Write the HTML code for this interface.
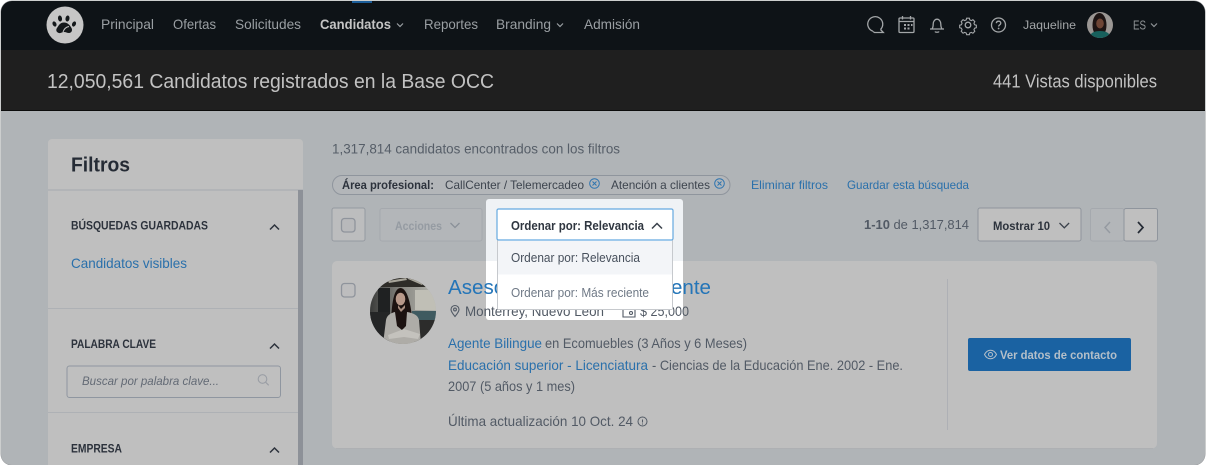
<!DOCTYPE html>
<html lang="es"><head><meta charset="utf-8"><title>Candidatos</title>
<style>
html,body{margin:0;padding:0;background:#fff;width:1206px;height:465px;overflow:hidden}
svg{display:block}
text{font-family:"Liberation Sans",sans-serif}
.b{font-weight:700}
.nav{font-size:14px;fill:#9a9fa3}
.sec{font-size:12px;font-weight:700;fill:#2c323c}
.blue{fill:#2a70ab}
.g{fill:#525a65}
</style></head><body>
<svg width="1206" height="465" viewBox="0 0 1206 465" xmlns="http://www.w3.org/2000/svg">
<defs>
<clipPath id="page"><rect x="1" y="1" width="1204" height="464" rx="11"/></clipPath>
<clipPath id="av"><circle cx="403" cy="311" r="33"/></clipPath>
<clipPath id="av2"><circle cx="1100" cy="25" r="13"/></clipPath>
<linearGradient id="ph" x1="0" x2="1" y1="0" y2="0"><stop offset="0" stop-color="#3a3b3a"/><stop offset=".5" stop-color="#8b8a84"/><stop offset="1" stop-color="#b3b4ae"/></linearGradient>
</defs>
<rect width="1206" height="465" fill="#fff"/>
<rect x="0.5" y="0.5" width="1205" height="465" rx="11.5" fill="#9a9c9e"/>
<g clip-path="url(#page)">
<rect width="1206" height="465" fill="#b0b4b7"/>
<rect y="0" width="1206" height="50" fill="#0e1317"/>
<rect y="50" width="1206" height="61" fill="#1f1f1f"/>
<rect y="110" width="1206" height="1" fill="#0c0c0c"/>
<rect x="352" y="0" width="20" height="3" fill="#1c5e9a"/>

<!-- logo -->
<circle cx="65" cy="25" r="18.500" fill="#c6c6c6"/>
<path d="M59 33c-2.500-.5-3.500-3-2-5 1.500-2.200 3-5.500 7-5.500 4 0 6 3 7.500 5.500 1.300 2.200 0 5-2.500 5-2 0-3-1-5-1s-3 1.500-5 1z" fill="#14181b"/>
<ellipse cx="54.500" cy="24" rx="1.900" ry="2.700" fill="#14181b" transform="rotate(-25 54.500 24)"/>
<ellipse cx="60" cy="18.500" rx="2" ry="3" fill="#14181b" transform="rotate(-10 60 18.500)"/>
<ellipse cx="67.500" cy="18.500" rx="2" ry="3" fill="#14181b" transform="rotate(10 67.500 18.500)"/>
<ellipse cx="74" cy="24" rx="1.900" ry="2.700" fill="#14181b" transform="rotate(25 74 24)"/>
<path d="M63 32c1-3 3-5 6-5.500" stroke="#c6c6c6" stroke-width="1" fill="none"/>

<!-- nav -->
<text class="nav" x="101" y="29" textLength="53" lengthAdjust="spacingAndGlyphs">Principal</text>
<text class="nav" x="173" y="29" textLength="43" lengthAdjust="spacingAndGlyphs">Ofertas</text>
<text class="nav" x="235" y="29" textLength="66" lengthAdjust="spacingAndGlyphs">Solicitudes</text>
<text class="nav b" x="320" y="29" textLength="71" lengthAdjust="spacingAndGlyphs" style="fill:#c4c4c4">Candidatos</text>
<path d="M397 23.500l3 3 3-3" stroke="#9a9fa3" stroke-width="1.200" fill="none"/>
<text class="nav" x="424" y="29" textLength="54" lengthAdjust="spacingAndGlyphs">Reportes</text>
<text class="nav" x="496" y="29" textLength="55" lengthAdjust="spacingAndGlyphs">Branding</text>
<path d="M557 23.500l3 3 3-3" stroke="#9a9fa3" stroke-width="1.200" fill="none"/>
<text class="nav" x="584" y="29" textLength="56" lengthAdjust="spacingAndGlyphs">Admisión</text>

<!-- nav icons -->
<g fill="none" stroke="#a3a6a8" stroke-width="1.300">
<path d="M880.500 29.500a7.500 7.500 0 1 0-7.500 1.800"/><path d="M873 31.500l1.500 1h8.800l-2.800-3"/>
<rect x="899" y="18" width="15" height="14.500" rx="1"/><path d="M902.500 16v3.500M910.500 16v3.500M899 21.500h15"/>
<path d="M930 29h14M932 29c1-1.500 1.200-2.500 1.200-5 0-2.500 1.700-4.800 3.800-4.800s3.800 2.300 3.800 4.800c0 2.500.2 3.500 1.200 5M935 31.500c.5 1 3.500 1 4 0"/>
<circle cx="968" cy="25" r="2.800"/><path d="M966.400 17.500h3.200l.5 2 1.800.8 1.900-1 2.200 2.200-1 1.900.8 1.800 2 .5v3l-2 .6-.8 1.700 1 1.900-2.200 2.300-1.900-1-1.800.7-.5 2h-3.200l-.5-2-1.800-.7-1.900 1-2.200-2.300 1-1.900-.8-1.700-2-.6v-3l2-.5.8-1.800-1-1.900 2.200-2.200 1.900 1 1.800-.8z" transform="translate(968 25) scale(.85) translate(-968 -25.500)"/>
<circle cx="998.500" cy="25" r="7"/><path d="M996.300 23.200c.2-1.300 1.100-2 2.300-2 1.300 0 2.200.8 2.200 1.900 0 1.700-2.200 1.800-2.200 3.400"/>
</g>
<rect x="904" y="24" width="2" height="2" fill="#a3a6a8"/><rect x="907.500" y="24" width="2" height="2" fill="#a3a6a8"/><rect x="904" y="27.500" width="2" height="2" fill="#a3a6a8"/><rect x="907.500" y="27.500" width="2" height="2" fill="#a3a6a8"/><rect x="911" y="24" width="1.500" height="2" fill="#a3a6a8"/>
<circle cx="998.600" cy="28.500" r=".9" fill="#a3a6a8"/>
<text x="1023" y="29" font-size="12" fill="#a3a6a8" textLength="53" lengthAdjust="spacingAndGlyphs">Jaqueline</text>
<g clip-path="url(#av2)">
<rect x="1087" y="12" width="26" height="26" fill="#9b9794"/>
<ellipse cx="1099.500" cy="25" rx="7" ry="12" fill="#1d1413"/>
<ellipse cx="1100" cy="23.500" rx="3.800" ry="5" fill="#6e4535"/>
<path d="M1089 38c1-5 5-7 11-7s10 2 11 7z" fill="#17605c"/>
</g>
<text x="1133" y="29.500" font-size="13" fill="#8f9396" textLength="13" lengthAdjust="spacingAndGlyphs">ES</text>
<path d="M1151 23.500l3 3 3-3" stroke="#8f9396" stroke-width="1.200" fill="none"/>

<!-- header -->
<text x="47" y="88" font-size="20" fill="#c2c2c2" textLength="447" lengthAdjust="spacingAndGlyphs">12,050,561 Candidatos registrados en la Base OCC</text>
<text x="993" y="87.500" font-size="18" fill="#c2c2c2" textLength="164" lengthAdjust="spacingAndGlyphs">441 Vistas disponibles</text>

<!-- sidebar -->
<path d="M48 465V143a4 4 0 0 1 4-4h247a4 4 0 0 1 4 4v322z" fill="#bfbfbf"/>
<rect x="48" y="189" width="255" height="2" fill="#b2b4b7"/>
<rect x="298" y="190" width="5" height="275" fill="#8d9198"/>
<text x="71" y="171.500" font-size="20" font-weight="700" fill="#252b35" textLength="59" lengthAdjust="spacingAndGlyphs">Filtros</text>
<text class="sec" x="71" y="229.500" textLength="137" lengthAdjust="spacingAndGlyphs">BÚSQUEDAS GUARDADAS</text>
<path d="M270 229.500l4.500-4.500 4.500 4.500" stroke="#2c323c" stroke-width="1.500" fill="none"/>
<text class="blue" x="71" y="268" font-size="14" textLength="116" lengthAdjust="spacingAndGlyphs">Candidatos visibles</text>
<rect x="48" y="308" width="250" height="1" fill="#aeb1b5"/>
<text class="sec" x="71" y="348" textLength="85" lengthAdjust="spacingAndGlyphs">PALABRA CLAVE</text>
<path d="M270 348.500l4.500-4.500 4.500 4.500" stroke="#2c323c" stroke-width="1.500" fill="none"/>
<rect x="67" y="366" width="213.500" height="31.500" rx="2.500" fill="#bfbfbf" stroke="#8f96a0" stroke-width="1"/>
<text x="82" y="385" font-size="12" font-style="italic" fill="#636a75" textLength="137" lengthAdjust="spacingAndGlyphs">Buscar por palabra clave...</text>
<circle cx="262.500" cy="379" r="4.300" fill="none" stroke="#9a9ea5" stroke-width="1.100"/><path d="M265.700 382.300l3 3" stroke="#9a9ea5" stroke-width="1.100"/>
<rect x="48" y="412" width="250" height="1" fill="#aeb1b5"/>
<text class="sec" x="71" y="452.500" textLength="51" lengthAdjust="spacingAndGlyphs">EMPRESA</text>
<path d="M270 452.500l4.500-4.500 4.500 4.500" stroke="#2c323c" stroke-width="1.500" fill="none"/>

<!-- results header -->
<text x="332" y="153.500" font-size="14" fill="#565e68" textLength="288" lengthAdjust="spacingAndGlyphs">1,317,814 candidatos encontrados con los filtros</text>
<rect x="332.500" y="175.500" width="397.500" height="19" rx="9.500" fill="#b3b6b9" stroke="#8f959d"/>
<text x="342" y="189" font-size="12" font-weight="700" fill="#2c323c" textLength="92" lengthAdjust="spacingAndGlyphs">Área profesional:</text>
<text x="445" y="189" font-size="12" fill="#3d444e" textLength="139" lengthAdjust="spacingAndGlyphs">CallCenter / Telemercadeo</text>
<g fill="none" stroke="#2f75b0" stroke-width="1">
<circle cx="594.500" cy="183.500" r="4.800"/><path d="M592.500 181.500l4 4m0-4l-4 4"/>
<circle cx="719.500" cy="183.500" r="4.800"/><path d="M717.500 181.500l4 4m0-4l-4 4"/>
</g>
<text x="611" y="189" font-size="12" fill="#3d444e" textLength="99" lengthAdjust="spacingAndGlyphs">Atención a clientes</text>
<text class="blue" x="751" y="189" font-size="12" textLength="77" lengthAdjust="spacingAndGlyphs">Eliminar filtros</text>
<text class="blue" x="847" y="189" font-size="12" textLength="122" lengthAdjust="spacingAndGlyphs">Guardar esta búsqueda</text>

<rect x="332" y="208" width="33" height="33" rx="2" fill="#bcbdbe" stroke="#959aa1"/>
<rect x="341.500" y="218.500" width="13.500" height="13.500" rx="3" fill="#b8b9bb" stroke="#8f949c" stroke-width="1.300"/>
<rect x="380" y="208.500" width="102" height="32.500" rx="2" fill="#b3b6b9" stroke="#a5a9ae"/>
<text x="395" y="230" font-size="12" font-weight="700" fill="#959ba2" textLength="47" lengthAdjust="spacingAndGlyphs">Acciones</text>
<path d="M450.500 223l4.500 4.500 4.500-4.500" stroke="#8a9098" stroke-width="1.300" fill="none"/>

<text x="864" y="229" font-size="13" fill="#525a65" textLength="105" lengthAdjust="spacingAndGlyphs"><tspan font-weight="700">1-10</tspan> de 1,317,814</text>
<rect x="978" y="208" width="103" height="33" rx="2" fill="#bfbfbf" stroke="#8f959d"/>
<text x="993" y="230" font-size="12" font-weight="700" fill="#2c323c" textLength="57" lengthAdjust="spacingAndGlyphs">Mostrar 10</text>
<path d="M1059.500 223l4.800 4.800 4.800-4.800" stroke="#3a414b" stroke-width="1.300" fill="none"/>
<rect x="1090.500" y="208.500" width="33.500" height="32.500" rx="2" fill="#b3b6b9" stroke="#a5a9ae"/>
<path d="M1110 222l-5 5.500 5 5.500" stroke="#959aa1" stroke-width="1.500" fill="none"/>
<rect x="1124" y="208.500" width="33.500" height="32.500" rx="2" fill="#bfbfbf" stroke="#8f959d"/>
<path d="M1138 222l5 5.500-5 5.500" stroke="#252b35" stroke-width="1.700" fill="none"/>

<!-- card -->
<rect x="332" y="261" width="825" height="187.500" rx="5" fill="#bfbfbf"/>
<rect x="336" y="448" width="817" height="1" fill="#aeb0b3"/>
<rect x="341.500" y="283.500" width="13.500" height="13.500" rx="3" fill="#bdbdbe" stroke="#8f949c" stroke-width="1.300"/>

<g clip-path="url(#av)">
<rect x="370" y="278" width="66" height="66" fill="url(#ph)"/>
<rect x="370" y="278" width="66" height="9" fill="#2e2c28"/>
<path d="M388 281l18-3 1 2-18 3zM408 279l14 6 1-2-14-6z" fill="#a8a59a"/>
<rect x="378" y="288" width="12" height="24" fill="#1f2122"/>
<rect x="415" y="290" width="21" height="20" fill="#c0bfb6"/>
<rect x="370" y="312" width="20" height="32" fill="#242526"/>
<rect x="412" y="311" width="24" height="9" fill="#3f5a60"/>
<rect x="414" y="320" width="22" height="24" fill="#2c2c2b"/>
<path d="M391 330c0-22 2-42 9.500-42s11.500 20 12.500 42l-4 2h-14z" fill="#1c1210"/>
<ellipse cx="400.500" cy="299" rx="4.800" ry="6.300" fill="#b8998a"/>
<path d="M383 344l3-24c1-5 5-7 9-8l2 14 5 4 4-4 1-14c6 1 11 3 12 8l2 24z" fill="#aeaca7"/>
<path d="M397 312l4.500 18 5-18-2-6h-6z" fill="#1c1210"/>
<path d="M398 305l3 4 4-4v3l-4 4-3-4z" fill="#a98e80"/>
<path d="M388 335l16-6 16 5-2 5-14-2-15 2z" fill="#c4c2bd"/>
</g>

<rect x="947" y="279" width="1" height="151" fill="#aeb0b5"/>
<rect x="968" y="338" width="163" height="33" rx="2" fill="#1a62a2"/>
<g fill="none" stroke="#b4bfc9" stroke-width="1"><path d="M984.500 354.500c1.500-3 3.500-4.300 6-4.300s4.500 1.300 6 4.300c-1.500 3-3.500 4.300-6 4.300s-4.500-1.300-6-4.300z"/><circle cx="990.500" cy="354.500" r="2"/></g>
<text x="1000" y="359" font-size="12" font-weight="700" fill="#b4bfc9" textLength="117" lengthAdjust="spacingAndGlyphs">Ver datos de contacto</text>

<text class="blue" x="448" y="348" font-size="14" textLength="94" lengthAdjust="spacingAndGlyphs">Agente Bilingue</text>
<text class="g" x="545" y="348" font-size="14" textLength="202" lengthAdjust="spacingAndGlyphs">en Ecomuebles (3 Años y 6 Meses)</text>
<text class="blue" x="448" y="370" font-size="14" textLength="200" lengthAdjust="spacingAndGlyphs">Educación superior - Licenciatura</text>
<text class="g" x="652" y="370" font-size="14" textLength="251" lengthAdjust="spacingAndGlyphs">- Ciencias de la Educación Ene. 2002 - Ene.</text>
<text class="g" x="448" y="391" font-size="14" textLength="127" lengthAdjust="spacingAndGlyphs">2007 (5 años y 1 mes)</text>
<text class="g" x="448" y="426" font-size="14" textLength="185" lengthAdjust="spacingAndGlyphs">Última actualización 10 Oct. 24</text>
<g fill="none" stroke="#525a65" stroke-width="1"><circle cx="642.500" cy="421.500" r="4.500"/><path d="M642.500 419.500v3M642.500 423.500v1"/></g>

<!-- spotlight -->
<rect x="486" y="199" width="197" height="121" rx="3" fill="#eff2f5"/>
<path d="M486 261h197v56a3 3 0 0 1-3 3H489a3 3 0 0 1-3-3z" fill="#fff"/>

<!-- text under spotlight edges -->
<text x="448" y="294" font-size="20" fill="#2475b8" textLength="263" lengthAdjust="spacingAndGlyphs">Asesor de atención al cliente</text>
<g fill="none" stroke="#525a65" stroke-width="1.100"><path d="M455 316.500c-2.500-3-4-5-4-7a4 4 0 0 1 8 0c0 2-1.500 4-4 7z"/><circle cx="455" cy="309.500" r="1.400"/></g>
<text class="g" x="465" y="316" font-size="14" textLength="139" lengthAdjust="spacingAndGlyphs">Monterrey, Nuevo León</text>
<g fill="none" stroke="#525a65" stroke-width="1.100"><path d="M623 309.500v7.500h12v-7.500h-12zM628 309.500l6-2.500 1.500 3"/><circle cx="631" cy="313" r="1.500"/></g>
<text class="g" x="640" y="316" font-size="14" textLength="49" lengthAdjust="spacingAndGlyphs">$ 25,000</text>

<!-- dropdown -->
<rect x="497" y="239" width="176" height="71" rx="2" fill="#c6c9cd"/>
<rect x="498" y="240" width="174" height="69" fill="#fff"/>
<rect x="498" y="241" width="174" height="33.500" fill="#f3f5f8"/>
<rect x="497" y="209" width="176" height="31" fill="#fff" rx="1.500"/>
<rect x="497" y="209" width="176" height="31" fill="none" stroke="#65a9e0" stroke-width="1.200" rx="1.500"/>
<text x="511" y="230" font-size="13" font-weight="700" fill="#2f3640" textLength="133" lengthAdjust="spacingAndGlyphs">Ordenar por: Relevancia</text>
<path d="M652 228.500l5-5 5 5" stroke="#3a414b" stroke-width="1.500" fill="none"/>
<text x="511" y="262" font-size="13" fill="#47505c" textLength="129" lengthAdjust="spacingAndGlyphs">Ordenar por: Relevancia</text>
<text x="511" y="297" font-size="13" fill="#6f7986" textLength="138" lengthAdjust="spacingAndGlyphs">Ordenar por: Más reciente</text>
</g>
</svg>
</body></html>
